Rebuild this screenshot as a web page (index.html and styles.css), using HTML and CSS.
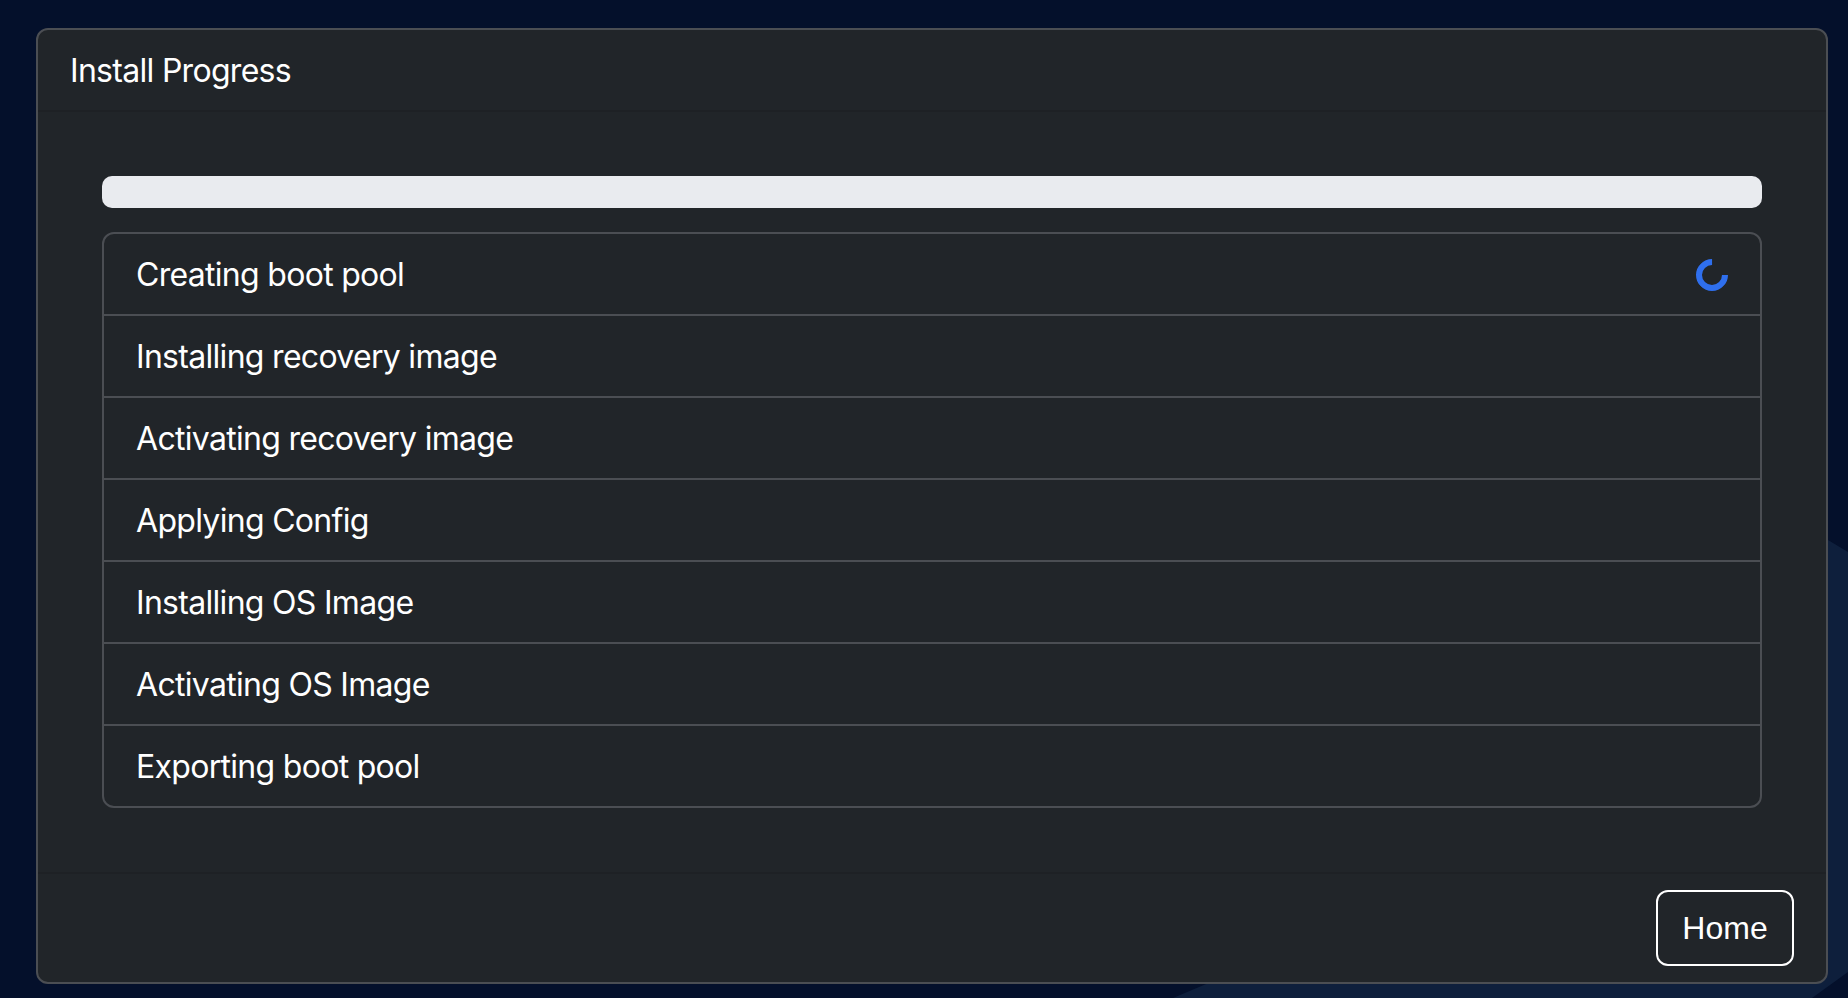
FILE: index.html
```html
<!DOCTYPE html>
<html lang="en">
<head>
    <meta charset="UTF-8">
    <title>Install Progress</title>
    <link rel="stylesheet" href="styles.css">
</head>
<body>
    <svg class="backdrop" viewBox="0 0 1848 998" preserveAspectRatio="none" aria-hidden="true">
        <polygon class="wave" points="1173,998 1500,860 1828,540 1848,552 1848,972 1812,998"></polygon>
    </svg>

    <div class="card">
        <div class="card-header">Install Progress</div>

        <div class="card-body">
            <div class="progress"></div>

            <ul class="list-group">
                <li class="list-item">
                    Creating boot pool
                    <span class="spinner"></span>
                </li>
                <li class="list-item">Installing recovery image</li>
                <li class="list-item">Activating recovery image</li>
                <li class="list-item">Applying Config</li>
                <li class="list-item">Installing OS Image</li>
                <li class="list-item">Activating OS Image</li>
                <li class="list-item">Exporting boot pool</li>
            </ul>
        </div>

        <div class="card-footer">
            <button class="button">Home</button>
        </div>
    </div>
</body>
</html>
```

FILE: styles.css
```css
html, body {
    height: 100%;
}

body {
    margin: 0;
    padding: 28px 20px 14px 36px;
    box-sizing: border-box;
    background-color: #04102b;
    font-family: Inter, "Liberation Sans", sans-serif;
    font-size: 32px;
    line-height: 48px;
    letter-spacing: -0.7px;
    color: #fff;
    overflow: hidden;
}

/* Fondo */
.backdrop {
    position: absolute;
    top: 0;
    left: 0;
    width: 100%;
    height: 100%;
}

.wave {
    fill: #0e1f3c;
}

/* Tarjeta */
.card {
    position: relative;
    display: flex;
    flex-direction: column;
    height: 100%;
    box-sizing: border-box;
    background-color: #212529;
    border: 2px solid #4b4e53;
    border-radius: 12px;
}

.card-header {
    padding: 17px 32px 15px;
    border-bottom: 2px solid #1e2125;
}

.card-body {
    flex: 1;
    padding: 64px;
}

.progress {
    height: 32px;
    border-radius: 10px;
    background-color: #e9ebef;
    margin-bottom: 24px;
}

/* Lista de pasos */
.list-group {
    list-style: none;
    margin: 0;
    padding: 0;
    border: 2px solid #4b4e53;
    border-radius: 12px;
}

.list-item {
    display: flex;
    align-items: center;
    justify-content: space-between;
    box-sizing: border-box;
    height: 82px;
    padding: 2px 32px 0;
    border-bottom: 2px solid #4b4e53;
}

.list-item:last-child {
    height: 80px;
    border-bottom: none;
}

.spinner {
    width: 32px;
    height: 32px;
    box-sizing: border-box;
    border: 6px solid #2f6fed;
    border-top-color: transparent;
    border-radius: 50%;
    transform: rotate(45deg);
}

/* Pie */
.card-footer {
    display: flex;
    justify-content: flex-end;
    padding: 16px 32px;
    border-top: 2px solid #1e2125;
}

.button {
    width: 138px;
    height: 76px;
    background: transparent;
    border: 2px solid #fff;
    border-radius: 12px;
    font-family: "Liberation Sans", Arial, sans-serif;
    font-size: 32px;
    color: #fff;
    cursor: pointer;
}
```
